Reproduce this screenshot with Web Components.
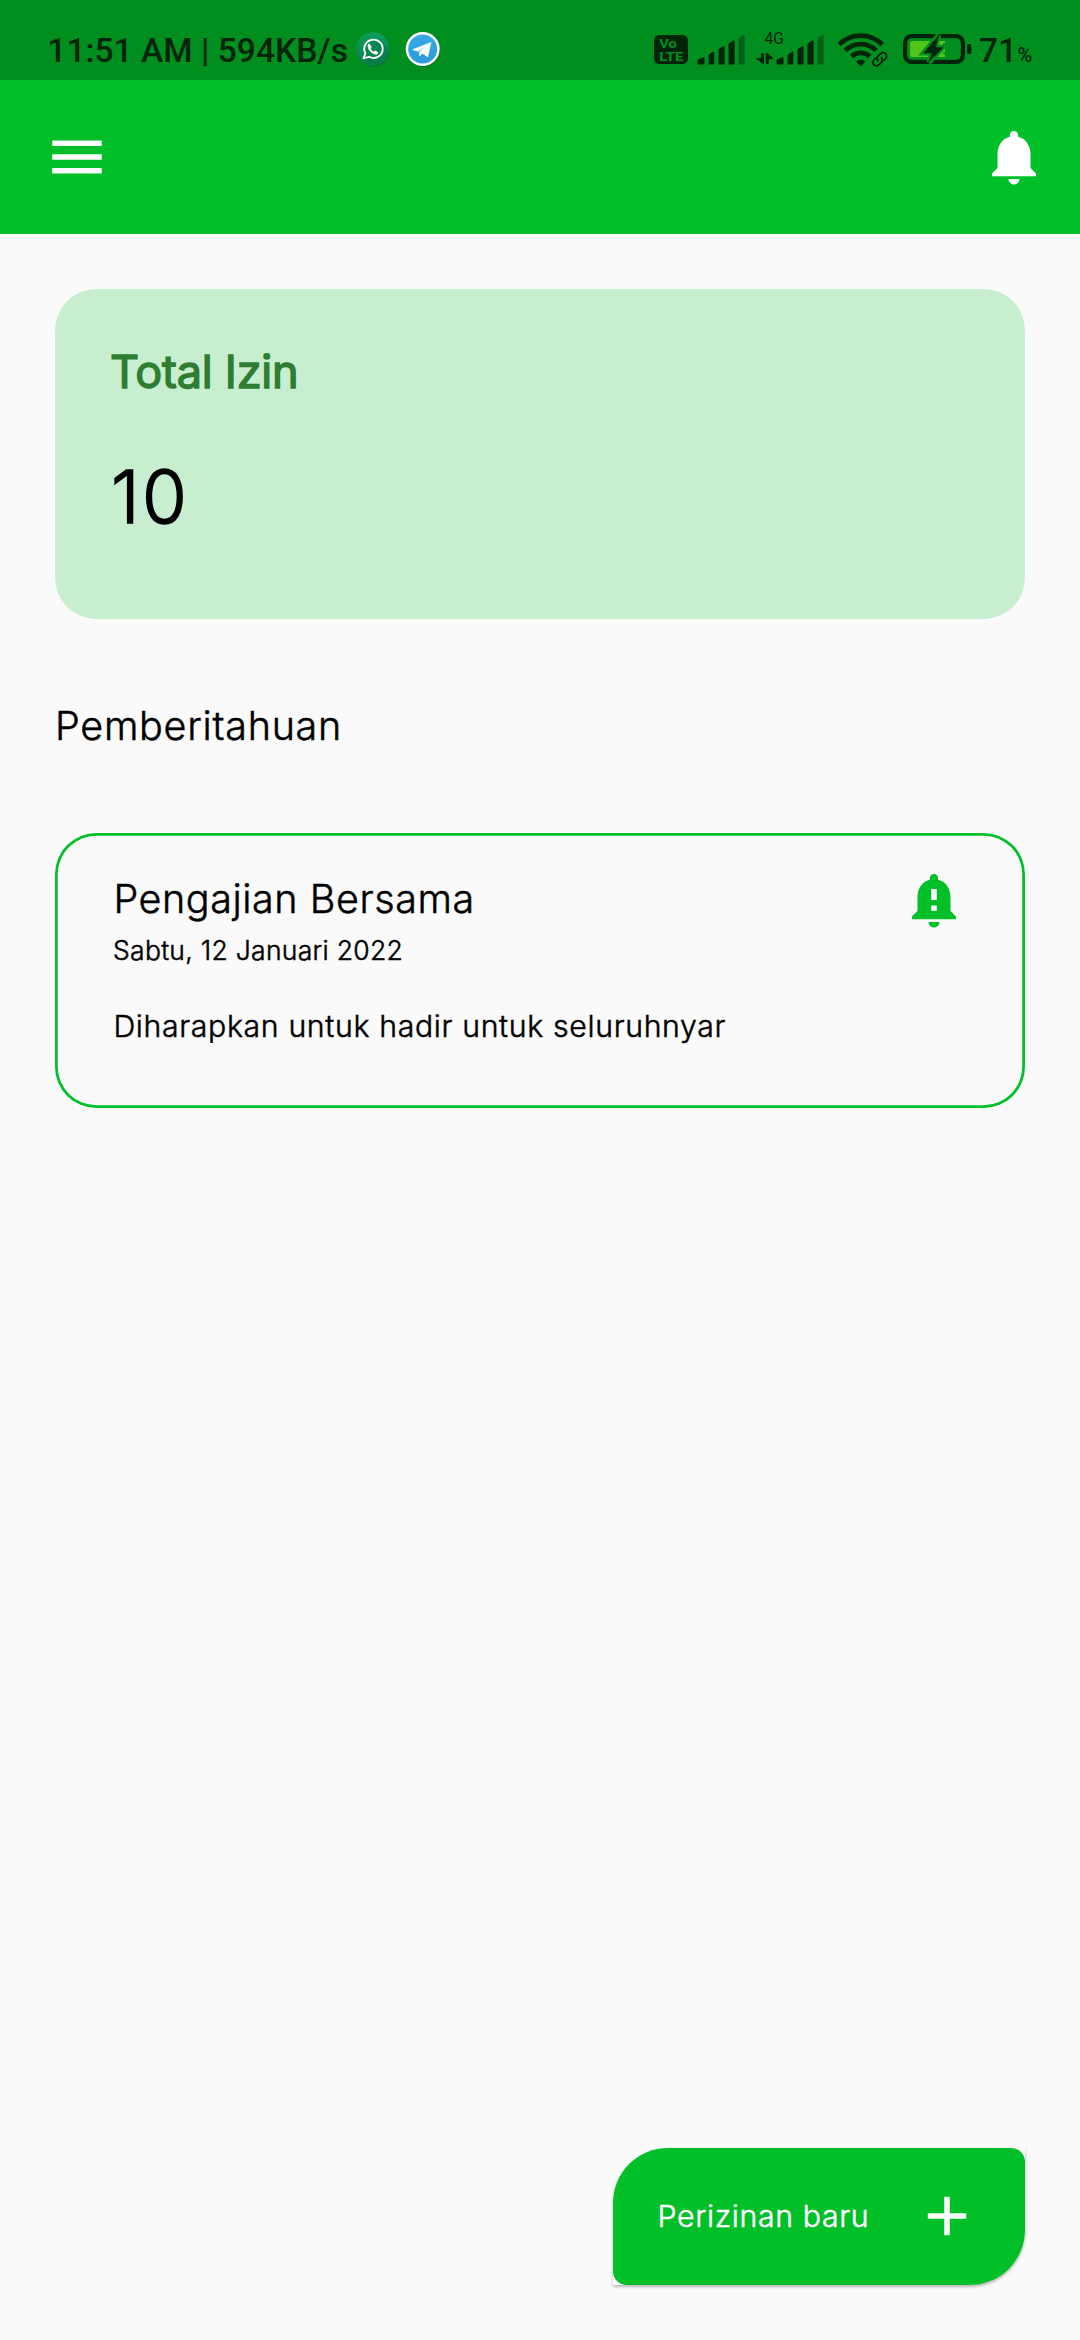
<!DOCTYPE html>
<html lang="id">
<head>
<meta charset="utf-8">
<title>Izin</title>
<style>
  html, body { margin: 0; padding: 0; background: #fafafa; }
  body { font-family: Inter, "Liberation Sans", sans-serif; }
</style>
</head>
<body>
<izin-app>
  <status-bar slot="top"></status-bar>
  <app-bar slot="top"></app-bar>
  <total-card label="Total Izin">10</total-card>
  <section-title>Pemberitahuan</section-title>
  <notice-card>
    <span slot="title">Pengajian Bersama</span>
    <span slot="date">Sabtu, 12 Januari 2022</span>
    Diharapkan untuk hadir untuk seluruhnyar
  </notice-card>
  <fab-button slot="bottom">Perizinan baru</fab-button>
</izin-app>

<script>
const define = (name, html) => customElements.define(name, class extends HTMLElement {
  constructor() {
    super();
    const t = document.createElement('template');
    t.innerHTML = html;
    this.attachShadow({ mode: 'open' }).appendChild(t.content.cloneNode(true));
    const label = this.shadowRoot.querySelector('[data-label]');
    if (label) label.textContent = this.getAttribute('label');
  }
});

define('izin-app', `
<style>
  :host { display: flex; flex-direction: column; width: 1080px; height: 2340px; background: #fafafa; overflow: hidden; color: #000; }
  main { flex: 1; display: flex; flex-direction: column; padding: 55px 55px 0; }
  footer { display: flex; justify-content: flex-end; padding: 0 55px 55px; }
</style>
<slot name="top"></slot>
<main><slot></slot></main>
<footer><slot name="bottom"></slot></footer>`);

define('status-bar', `
<style>
  :host { display: flex; align-items: flex-start; box-sizing: border-box; height: 80px; padding: 0 0 0 47.3px; background: #008f1f; color: #00240a; font-family: Roboto, sans-serif; }
  .time { font-size: 33.5px; font-weight: 500; line-height: 40px; padding-top: 30.5px; width: 306px; letter-spacing: .06px; white-space: nowrap; }
  svg { display: block; }
  .left { width: 90px; height: 80px; }
  .right { width: 337px; height: 80px; margin-left: 196.7px; }
  .pct { display: flex; align-items: baseline; padding-top: 30.5px; line-height: 40px; font-size: 33.5px; font-weight: 500; margin-left: 2px; }
  small { font-size: 20px; font-weight: 500; margin-left: .4px; }
</style>
<span class="time">11:51 AM | 594KB/s</span>
<svg class="left" viewBox="353.3 0 90 80">
  <defs>
    <linearGradient id="wa" x1="0" y1="0" x2="0" y2="1"><stop offset="0" stop-color="#0b9e5b"/><stop offset="1" stop-color="#078048"/></linearGradient>
    <linearGradient id="tg" x1="0" y1="0" x2="0" y2="1"><stop offset="0" stop-color="#37aae6"/><stop offset="1" stop-color="#2a9bd8"/></linearGradient>
  </defs>
  <circle cx="373.8" cy="49.9" r="16.8" fill="#00661f" opacity=".6"/>
  <circle cx="373.2" cy="49" r="16.8" fill="url(#wa)"/>
  <path d="M380 41 L389.8 50.5 A16.8 16.8 0 0 1 371 65.6 L364 58.5Z" fill="#087a48" opacity=".8"/>
  <path d="M363.8 58.3 L365.7 53.2 A9.2 9.2 0 1 1 369.2 56.8 Z" fill="#06864b" stroke="#fff" stroke-width="1.9" stroke-linejoin="round"/>
  <path d="M369.7 43.6c-1.2.3-2 1.6-1.7 3.2.8 4 3.6 6.7 7.3 7.6 1.7.3 3.1-.5 3.3-2l-3-2-1.6 1.3c-1.5-.8-2.5-1.8-3.1-3.2l1.1-1.5z" fill="#fff"/>
  <circle cx="423.6" cy="50" r="17" fill="#00661f" opacity=".6"/>
  <circle cx="423" cy="49" r="17" fill="#fff"/>
  <circle cx="423" cy="49" r="14.5" fill="url(#tg)"/>
  <path d="M413 49.6 L431.2 42.6 L428 57 L422.7 53.2 L420 55.9 L419.7 51.7 L426.5 46.2 L417.9 51.2Z" fill="#fff" stroke="#fff" stroke-width=".6" stroke-linejoin="round"/>
</svg>
<svg class="right" viewBox="640 0 337 80" fill="#00240a">
  <rect x="654" y="35" width="34" height="29" rx="5.5"/>
  <g fill="#008f1f" font-family="Roboto, sans-serif" font-weight="700">
    <text x="659.3" y="47.8" font-size="12.5" textLength="17.5" lengthAdjust="spacingAndGlyphs">Vo</text>
    <text x="659.3" y="60.5" font-size="13" textLength="24" lengthAdjust="spacingAndGlyphs">LTE</text>
  </g>
  <g id="sig">
    <path d="M697.5 64.5v-3.5q0-1.2 1-1.7l5-2.3q1 0 1 1v5.5q0 1-1 1z"/>
    <path d="M708.5 64.5v-8.5q0-1.2 1-1.9l4-2.6q.8 0 .8 1v11q0 1-1 1z"/>
    <path d="M718.5 64.5v-14q0-1.2 1-1.9l4-2.6q1.2 0 1.2 1v16.5q0 1-1 1z"/>
    <path d="M728.5 64.5v-19.5q0-1.2 1-1.9l4-2.9q1.2 0 1.2 1v22.3q0 1-1 1z"/>
    <path d="M738.5 64.5v-25q0-1.2 1-1.9l4-2.9q1.2 0 1.2 1v27.8q0 1-1 1z" opacity=".42"/>
  </g>
  <use href="#sig" x="79"/>
  <text x="764.5" y="44" font-size="16" font-family="Roboto, sans-serif" textLength="19.2" lengthAdjust="spacingAndGlyphs">4G</text>
  <path d="M761 53.2h3v10.8h-1.2l-6-4.8v-1.2h4.2z M765.8 64v-11h1.4l5.8 4.8v1.4h-4.2v4.8z"/>
  <g fill="none" stroke="#00240a" stroke-width="4.7">
    <path d="M839.2 44.5a30.3 30.3 0 0 1 43 0"/>
    <path d="M845.3 50.5a21.7 21.7 0 0 1 30.8 0"/>
    <path d="M851.6 56.5a13 13 0 0 1 18.2 0"/>
  </g>
  <path d="M856.5 61.2a6.3 6.3 0 0 1 8.4 0l-.3 1.1-2.6 2.9q-1.3 1.2-2.6 0l-2.6-2.9z"/>
  <g transform="translate(879.7 59.3) rotate(-42)">
    <rect x="-10" y="-5.6" width="20" height="11.2" rx="5.6" fill="#008f1f"/>
    <path d="M-2 -3.5h-2.6a3.5 3.5 0 0 0 0 7h3.8a3.5 3.5 0 0 0 3-4.2M2 3.5h2.6a3.5 3.5 0 0 0 0-7h-3.8a3.5 3.5 0 0 0-3 4.2" fill="none" stroke="#00240a" stroke-width="1.9"/>
  </g>
  <rect x="905.1" y="36.1" width="57.8" height="25.8" rx="6.5" fill="none" stroke="#00240a" stroke-width="4.2"/>
  <path d="M967.2 45.5q0-1.5 1.5-1.5h1q1.6 0 1.6 1.5v7q0 1.5-1.6 1.5h-1q-1.5 0-1.5-1.5z"/>
  <path d="M912 41h33v2h-2v2h2v7h-2v2h2v3h-33q-2 0-2-2v-12q0-2 2-2z" fill="#52c41a"/>
  <path d="M938.8 35 L923.5 53 h8.3 L929 62.5 L942.8 47.3 h-7.6z" fill="#008f1f" stroke="#008f1f" stroke-width="5"/>
  <path d="M939.5 34 L923.3 53.3 h8.8 L927.5 63.5 L943.7 47.2 h-7.9z"/>
</svg>
<span class="pct">71<small>%</small></span>`);

define('app-bar', `
<style>
  :host { display: flex; justify-content: space-between; align-items: center; box-sizing: border-box; height: 154px; padding: 0 33px 0 43.9px; background: #00bf29; }
  svg { display: block; width: 66px; height: 66px; fill: #fff; }
</style>
<svg viewBox="0 0 24 24"><path d="M3 18h18v-2H3v2zm0-5h18v-2H3v2zm0-7v2h18V6H3z"/></svg>
<svg viewBox="0 0 24 24"><path d="M12 22c1.1 0 2-.9 2-2h-4c0 1.1.89 2 2 2zm6-6v-5c0-3.07-1.64-5.64-4.5-6.32V4c0-.83-.67-1.5-1.5-1.5s-1.5.67-1.5 1.5v.68C7.63 5.36 6 7.92 6 11v5l-2 2v1h16v-1l-2-2z"/></svg>`);

define('total-card', `
<style>
  :host { display: flex; flex-direction: column; box-sizing: border-box; height: 330px; padding: 52.5px 55px 0; border-radius: 41.25px; background: #c8eed0; }
  .label { font-size: 45px; line-height: 60px; letter-spacing: -.24px; color: #2e7d32; -webkit-text-stroke: 1.4px #2e7d32; }
  .value { margin: 50.5px 0 0 .9px; font-size: 72.6px; line-height: 90px; font-weight: 300; letter-spacing: 2.6px; -webkit-text-stroke: 1.4px #000; }
</style>
<span class="label" data-label></span>
<span class="value"><slot></slot></span>`);

define('section-title', `
<style>
  :host { display: block; margin-top: 82px; font-size: 39.5px; font-weight: 300; line-height: 50px; letter-spacing: .72px; -webkit-text-stroke: .5px #000; }
</style>
<slot></slot>`);

define('notice-card', `
<style>
  :host { display: flex; justify-content: space-between; align-items: flex-start; box-sizing: border-box; height: 275px; margin-top: 82.3px; box-shadow: inset 0 0 0 2.75px #00bf29; border-radius: 41.25px; padding: 40.9px 57.75px 0 58.4px; font-weight: 300; }
  .text { display: flex; flex-direction: column; -webkit-text-stroke: .5px #000; }
  .title { font-size: 39.5px; line-height: 50px; letter-spacing: .57px; }
  .date { font-size: 26.5px; line-height: 36px; letter-spacing: .28px; margin: 7.6px 0 0 -.3px; }
  .body { font-size: 30.25px; line-height: 40px; letter-spacing: .65px; margin-top: 38px; }
  svg { display: block; width: 66px; height: 66px; margin-top: -7.1px; }
</style>
<div class="text">
  <span class="title"><slot name="title"></slot></span>
  <span class="date"><slot name="date"></slot></span>
  <span class="body"><slot></slot></span>
</div>
<svg viewBox="0 0 24 24"><path fill="#fff" d="M11 8h2v4h-2zM11 14h2v2h-2z"/><path fill="#00bf29" d="M18 16v-5c0-3.07-1.64-5.64-4.5-6.32V4c0-.83-.67-1.5-1.5-1.5s-1.5.67-1.5 1.5v.68C7.63 5.36 6 7.92 6 11v5l-2 2v1h16v-1l-2-2zm-5 0h-2v-2h2v2zm0-4h-2V8h2v4zm-1 10c1.1 0 2-.9 2-2h-4c0 1.1.89 2 2 2z"/></svg>`);

define('fab-button', `
<style>
  :host { display: block; background: #fff; border-radius: 55px 0 55px 0; box-shadow: 0 2px 3px rgba(0,0,0,.26), 0 0 2px rgba(0,0,0,.08); color: #fff; }
  .fill { display: flex; align-items: center; justify-content: space-between; box-sizing: border-box; width: 412.5px; height: 137.5px; padding: 0 45px 0 45px; border-radius: 55px 13.75px 55px 13.75px; background: #00bf29; font-size: 30.25px; font-weight: 300; line-height: 40px; letter-spacing: .65px; }
  span { -webkit-text-stroke: .5px #fff; }
  svg { display: block; width: 66px; height: 66px; fill: #fff; }
</style>
<div class="fill"><span><slot></slot></span><svg viewBox="0 0 24 24"><path d="M19 13h-6v6h-2v-6H5v-2h6V5h2v6h6v2z"/></svg></div>`);
</script>
</body>
</html>
